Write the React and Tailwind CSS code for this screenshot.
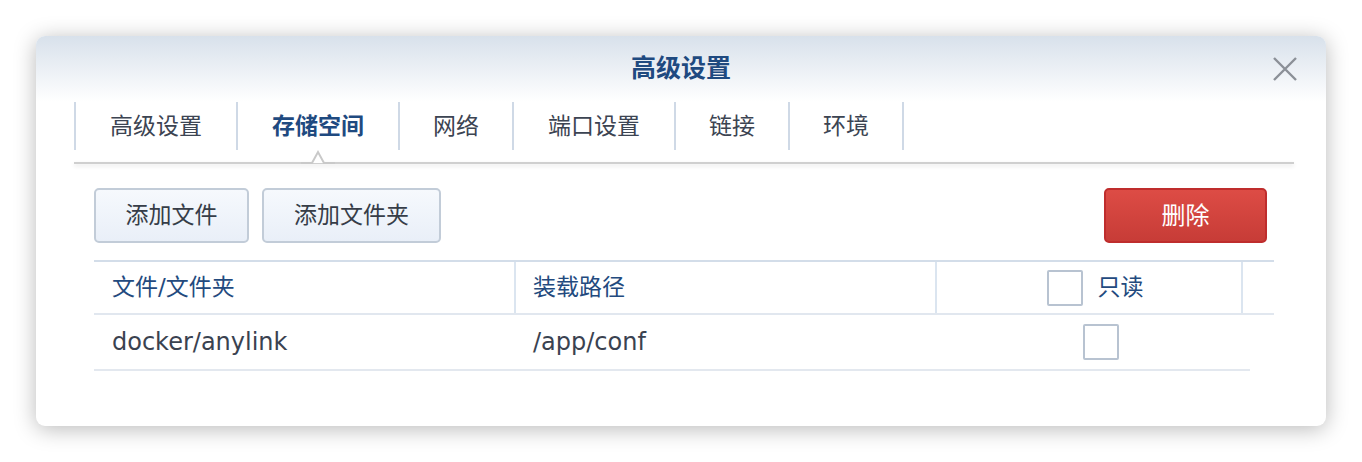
import React from 'react'

const tabs = [
    { label: '高级设置', w: 'w-[162px]' },
    { label: '存储空间', w: 'w-[162px]' },
    { label: '网络', w: 'w-[114px]' },
    { label: '端口设置', w: 'w-[162px]' },
    { label: '链接', w: 'w-[114px]' },
    { label: '环境', w: 'w-[116px]' },
]

function Checkbox() {
    return <span className="block w-[36px] h-[36px] border-2 border-[#b8c3d1] rounded-[2px] bg-white"></span>
}

export default function App() {
    const active = 1
    return (
        <div className="w-full h-[462px] bg-white p-[36px] font-['DejaVu_Sans','Noto_Sans_CJK_SC',sans-serif]">
            <div className="w-[1290px] h-[390px] rounded-[9px] bg-white shadow-[0_3px_22px_rgba(0,0,0,0.28)] overflow-hidden flex flex-col">
                {/* header */}
                <div className="relative h-[66px] shrink-0 bg-gradient-to-b from-[#d8e1eb] to-white flex items-center justify-center">
                    <h1 className="text-[25px] font-bold text-[#1f4a80]">高级设置</h1>
                    <button className="absolute right-[28px] top-[21px]">
                        <svg width="26" height="24" viewBox="0 0 26 24">
                            <path d="M2 1 L24 23 M24 1 L2 23" stroke="#8b9097" strokeWidth="2.4" fill="none" />
                        </svg>
                    </button>
                </div>

                {/* tabs */}
                <div className="pl-[38px] pr-[32px]">
                    <div className="flex h-[48px]">
                        {tabs.map((t, i) => (
                            <div
                                key={t.label}
                                className={`relative flex items-center justify-center ${t.w} border-l-2 border-[#cfd9e6] text-[23px] ${i === tabs.length - 1 ? 'border-r-2' : ''} ${i === active ? 'text-[#1f4a80] font-bold' : 'text-[#3c4452]'}`}
                            >
                                {t.label}
                                {i === active && (
                                    <svg className="absolute left-1/2 -translate-x-1/2 top-[47px]" width="34" height="16" viewBox="0 0 34 16">
                                        <path d="M0 14 L11 14 L17 3 L23 14 L34 14" stroke="#c9c9c9" strokeWidth="2" fill="white" />
                                    </svg>
                                )}
                            </div>
                        ))}
                    </div>
                    <div className="mt-[12px] h-[2px] bg-[#cfcfcf] shadow-[0_2px_4px_rgba(0,0,0,0.12)]"></div>
                </div>

                {/* content */}
                <div className="pl-[58px] pr-[52px] pt-[24px]">
                    <div className="flex items-center gap-[13px]">
                        <button className="h-[55px] w-[155px] rounded-[5px] border-2 border-[#c2ccd8] bg-gradient-to-b from-[#f6f9fd] to-[#e9eff8] text-[23px] text-[#363d48]">添加文件</button>
                        <button className="h-[55px] w-[179px] rounded-[5px] border-2 border-[#c2ccd8] bg-gradient-to-b from-[#f6f9fd] to-[#e9eff8] text-[23px] text-[#363d48]">添加文件夹</button>
                        <button className="ml-auto mr-[7px] h-[55px] w-[163px] rounded-[5px] border-2 border-[#bf2d2d] bg-gradient-to-b from-[#dd4c45] to-[#c73c37] text-[24px] text-white">删除</button>
                    </div>

                    {/* table */}
                    <div className="mt-[17px]">
                        <div className="flex h-[55px] border-t-2 border-b-2 border-t-[#d3dde9] border-b-[#e1e7ef] text-[23px] text-[#234a7e]">
                            <div className="w-[420px] flex items-center pl-[18px]">文件/文件夹</div>
                            <div className="w-[421px] flex items-center pl-[17px] border-l-2 border-[#dbe5f0]">装载路径</div>
                            <div className="w-[306px] flex items-center justify-center gap-[15px] pl-[12px] border-l-2 border-[#dbe5f0]">
                                <Checkbox />
                                <span>只读</span>
                            </div>
                            <div className="flex-1 border-l-2 border-[#dbe5f0]"></div>
                        </div>
                        <div className="flex h-[56px] w-[1156px] border-b-2 border-[#e3e8ef] text-[24px] text-[#3a4250]">
                            <div className="w-[420px] flex items-center pl-[18px]">docker/anylink</div>
                            <div className="w-[421px] flex items-center pl-[19px]">/app/conf</div>
                            <div className="flex-1 flex items-center justify-center pl-[16px]">
                                <Checkbox />
                            </div>
                        </div>
                    </div>
                </div>
            </div>
        </div>
    )
}
